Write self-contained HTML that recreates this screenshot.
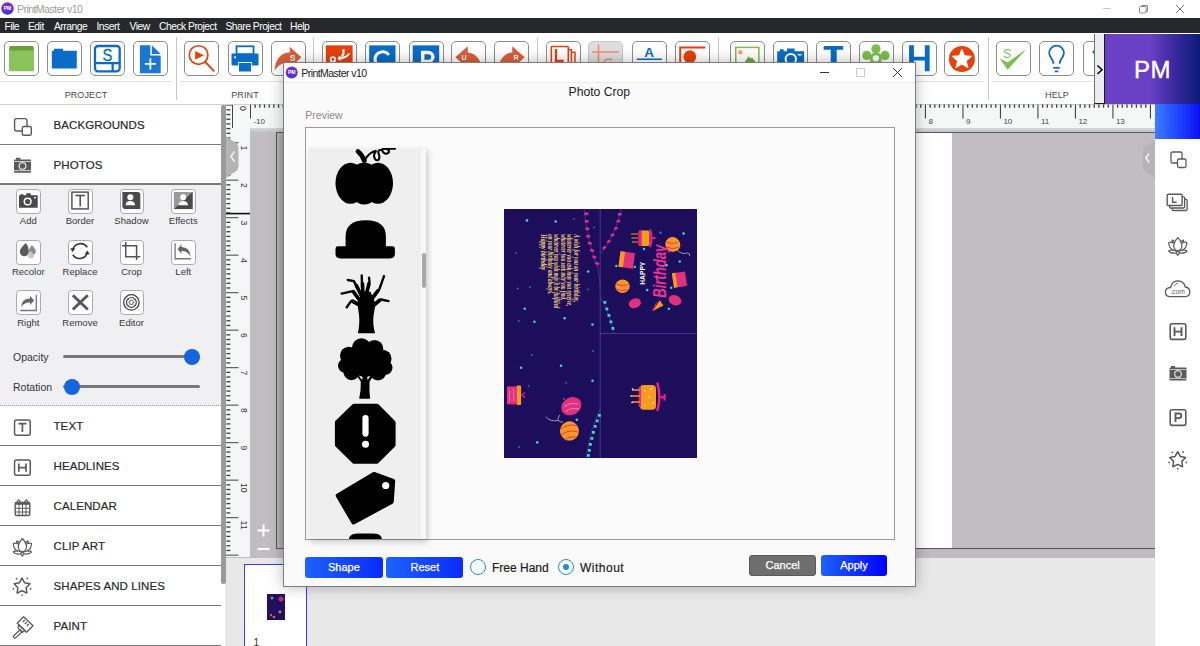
<!DOCTYPE html><html><head><meta charset="utf-8"><style>
*{margin:0;padding:0;box-sizing:border-box}
html,body{width:1200px;height:646px;overflow:hidden;background:#fff;font-family:"Liberation Sans",sans-serif;position:relative}
.a{position:absolute}
.btn{position:absolute;top:40.5px;width:35px;height:35.5px;border:1px solid #8c8c8c;border-radius:5px;background:#fff;overflow:hidden}
.btn svg{position:absolute;left:0;top:0}
.vsep{position:absolute;top:37px;width:1px;height:63px;background:#c8c8c8}
.hsep{position:absolute;top:81px;height:1px;background:#e2e2e2}
.glab{position:absolute;top:89.5px;font-size:9px;color:#484848;letter-spacing:0.1px;text-align:center}
.menu span{position:absolute;top:20.5px;font-size:10.3px;color:#fff;white-space:nowrap}
.row{position:absolute;left:0;width:221px;height:40px;background:#fff;border-bottom:1px solid #7a7a7a}
.row .t{position:absolute;left:53.5px;top:14px;font-size:11.5px;color:#2a2a2a;white-space:nowrap;letter-spacing:0.1px;-webkit-text-stroke:0.2px #2a2a2a}
.row svg{position:absolute;left:12px;top:11px}
.tool{position:absolute;width:24.5px;height:25.2px;border:1.3px solid #ababab;border-radius:3.5px;background:#fdfdfd}
.tl{position:absolute;font-size:9.5px;color:#383838;text-align:center;width:60px;white-space:nowrap}
.ri{position:absolute;left:1166px}
</style></head><body>
<div class="a" style="left:0;top:0;width:1200px;height:18px;background:#fff"></div>
<svg class="a" style="left:0;top:0" width="20" height="18"><defs><linearGradient id="lg1" x1="0" y1="0" x2="0" y2="1"><stop offset="0" stop-color="#8a2bb8"/><stop offset="1" stop-color="#4b32d6"/></linearGradient></defs>
<circle cx="7.5" cy="8.5" r="6.2" fill="url(#lg1)"/><text x="7.5" y="10.3" font-size="5" fill="#fff" text-anchor="middle" font-family="Liberation Sans" font-weight="bold">PM</text></svg>
<div class="a" style="left:17px;top:2.5px;font-size:10.5px;color:#9a9a9a;letter-spacing:-0.55px;white-space:nowrap">PrintMaster v10</div>
<div class="a" style="left:1103px;top:8px;width:8px;height:1px;background:#c8c8c8"></div>
<svg class="a" style="left:1138px;top:4px" width="11" height="10"><rect x="1.5" y="2.5" width="6.5" height="6.5" rx="1" fill="none" stroke="#888" stroke-width="1"/><path d="M3.5 2.5 V1.5 H9.5 V7.5 H8" fill="none" stroke="#888" stroke-width="1"/></svg>
<svg class="a" style="left:1175px;top:4px" width="10" height="10"><path d="M1 1 L9 9 M9 1 L1 9" stroke="#777" stroke-width="1"/></svg>

<div class="a menu" style="left:0;top:18px;width:1200px;height:15px;background:#27282c"></div>
<div class="menu">
<span style="left:4.5px;letter-spacing:-0.5px">File</span>
<span style="left:28px;letter-spacing:-0.5px">Edit</span>
<span style="left:54px;letter-spacing:-0.5px">Arrange</span>
<span style="left:96.5px;letter-spacing:-0.5px">Insert</span>
<span style="left:129.5px;letter-spacing:-0.5px">View</span>
<span style="left:159px;letter-spacing:-0.5px">Check Project</span>
<span style="left:225.5px;letter-spacing:-0.5px">Share Project</span>
<span style="left:290px;letter-spacing:-0.5px">Help</span>
</div>
<div class="a" style="left:0;top:103.5px;width:1200px;height:1px;background:#d0d0d0"></div>
<div class="btn" style="left:4px;"><svg width="35" height="36" viewBox="0 0 35 36" style="left:-1px;top:-1px"><rect x="5" y="5.1" width="25" height="25.2" rx="1.5" fill="#8bc45a"/><path d="M6.3 5.1 H28.7 L30 9.6 H5 Z" fill="#6a9e3a"/></svg></div>
<div class="btn" style="left:47px;"><svg width="35" height="36" viewBox="0 0 35 36" style="left:-1px;top:-1px"><path d="M4.8 9.7 H7 V7.8 H16 V9.7 H29.8 V27.6 H4.8 Z" fill="#0a6cc6"/></svg></div>
<div class="btn" style="left:90px;"><svg width="35" height="36" viewBox="0 0 35 36" style="left:-1px;top:-1px"><rect x="5" y="5" width="24.7" height="25.3" rx="3" fill="none" stroke="#0a6cc6" stroke-width="2.3"/><path d="M5 22.1 H29.7 M22.65 22.1 V30" stroke="#0a6cc6" stroke-width="2.3"/><text x="17.4" y="19.8" font-size="16.5" fill="#0a6cc6" text-anchor="middle" font-family="Liberation Sans" stroke="#0a6cc6" stroke-width="0.3" transform="translate(17.4 0) scale(0.9 1) translate(-17.4 0)">S</text></svg></div>
<div class="btn" style="left:133.2px;"><svg width="35" height="36" viewBox="0 0 35 36" style="left:-1px;top:-1px"><path d="M6.9 4.35 H17.3 V14.4 H27.7 V32.25 H6.9 Z" fill="#1a78d2"/><path d="M18.8 4.35 L27.7 12.9 H18.8 Z" fill="#1a78d2"/><path d="M17.4 17.3 V28.5 M11.8 22.9 H23" stroke="#fff" stroke-width="1.8"/></svg></div>
<div class="btn" style="left:184.4px;"><svg width="35" height="36" viewBox="0 0 35 36" style="left:-1px;top:-1px"><circle cx="14.6" cy="14.05" r="9.3" fill="none" stroke="#e8400a" stroke-width="1.7"/><path d="M21.3 21 L30.3 30.3" stroke="#e8400a" stroke-width="1.9"/><path d="M11.1 9.9 L19.9 14.3 L11.1 18.7 Z" fill="#e8400a"/></svg></div>
<div class="btn" style="left:228px;"><svg width="35" height="36" viewBox="0 0 35 36" style="left:-1px;top:-1px"><rect x="8.5" y="5.3" width="17" height="8" fill="none" stroke="#0a6cc6" stroke-width="1.8"/><rect x="3.5" y="12.5" width="27" height="12" rx="1" fill="#0a6cc6"/><rect x="10.5" y="21.5" width="13" height="9.5" fill="#0a6cc6" stroke="#fff" stroke-width="1"/><circle cx="7" cy="16.3" r="1.1" fill="#fff"/></svg></div>
<div class="btn" style="left:271.3px;"><svg width="35" height="36" viewBox="0 0 35 36" style="left:-1px;top:-1px"><path d="M3.6 29.8 C4 18.5 10 11.5 18.7 11.5 V5.85 L30.4 16.35 L18.7 27 V21.5 C12 21.5 7 24 3.6 29.8 Z" fill="#d9603b"/><text x="21.5" y="20.3" font-size="8.5" fill="#fff" text-anchor="middle" font-weight="bold" font-family="Liberation Sans">S</text></svg></div>
<div class="btn" style="left:322.3px;"><svg width="35" height="36" viewBox="0 0 35 36" style="left:-1px;top:-1px"><rect x="3.8" y="4.35" width="26.8" height="28" fill="#e8400a"/><circle cx="10.9" cy="18.45" r="2.3" fill="none" stroke="#fff" stroke-width="1.8"/><circle cx="17.9" cy="17.35" r="2.1" fill="#fff"/><path d="M19.5 15.5 Q22.5 13 21.2 8.1 M19.8 16.8 Q24 17 27.1 12.5" fill="none" stroke="#fff" stroke-width="2.2"/></svg></div>
<div class="btn" style="left:365.3px;"><svg width="35" height="36" viewBox="0 0 35 36" style="left:-1px;top:-1px"><rect x="4.2" y="4.35" width="26.3" height="28" fill="#0a6cc6"/><path d="M23.9 14 A7.6 7.6 0 1 0 24.5 21.5" fill="none" stroke="#fff" stroke-width="3"/></svg></div>
<div class="btn" style="left:408.6px;"><svg width="35" height="36" viewBox="0 0 35 36" style="left:-1px;top:-1px"><rect x="3.7" y="4.35" width="26.5" height="28" fill="#0a6cc6"/><path d="M13.7 32 V11.6 H19.5 A4.4 4.4 0 0 1 19.5 20.4 H13.7" fill="none" stroke="#fff" stroke-width="3.5"/></svg></div>
<div class="btn" style="left:451px;"><svg width="35" height="36" viewBox="0 0 35 36" style="left:-1px;top:-1px"><path d="M4.3 16.35 L16.8 5.2 V11.4 A14.7 20.6 0 0 1 31.5 32 H26 A9.2 10 0 0 0 16.8 22 V27.5 Z" fill="#d9603b"/><text x="13" y="19.4" font-size="7" fill="#fff" text-anchor="middle" font-weight="bold" font-family="Liberation Sans">U</text></svg></div>
<div class="btn" style="left:494px;"><svg width="35" height="36" viewBox="0 0 35 36" style="left:-1px;top:-1px"><path d="M30.7 16.35 L18.2 5.2 V11.4 A14.7 20.6 0 0 0 3.5 32 H9 A9.2 10 0 0 1 18.2 22 V27.5 Z" fill="#d9603b"/><text x="22" y="19.4" font-size="7" fill="#fff" text-anchor="middle" font-weight="bold" font-family="Liberation Sans">R</text></svg></div>
<div class="btn" style="left:546.3px;"><svg width="35" height="36" viewBox="0 0 35 36" style="left:-1px;top:-1px"><path d="M22.3 8.8 H25.4 V32 M25.4 11.2 H29 V32" fill="none" stroke="#e8400a" stroke-width="1.5"/><rect x="5.3" y="5.55" width="17" height="26" rx="1" fill="#fff" stroke="#e8400a" stroke-width="1.6"/><path d="M10 8 V20 H17.7" fill="none" stroke="#e8400a" stroke-width="2.3"/></svg></div>
<div class="btn" style="left:588.2px;background:#dedede;border-color:#c6c6c6;"><svg width="35" height="36" viewBox="0 0 35 36" style="left:-1px;top:-1px"><path d="M4.1 11.05 H31 M10.5 3.5 V33" stroke="#f28c6c" stroke-width="1.6"/><path d="M24.3 19.5 A5 5 0 1 0 24.6 26 V23.5 H20" fill="none" stroke="#f28c6c" stroke-width="1.5"/></svg></div>
<div class="btn" style="left:631.5px;"><svg width="35" height="36" viewBox="0 0 35 36" style="left:-1px;top:-1px"><text x="17.2" y="15.5" font-size="13.5" fill="#0a6cc6" text-anchor="middle" font-weight="bold" font-family="Liberation Sans">A</text><path d="M4.7 18.35 H29.9 M4.7 22 H29.9" stroke="#0a6cc6" stroke-width="1.5"/></svg></div>
<div class="btn" style="left:674.5px;"><svg width="35" height="36" viewBox="0 0 35 36" style="left:-1px;top:-1px"><path d="M5.2 33 V6.55 H30.4" fill="none" stroke="#e8400a" stroke-width="2"/><circle cx="14.8" cy="15.75" r="6.4" fill="#e8400a"/></svg></div>
<div class="btn" style="left:730.2px;"><svg width="35" height="36" viewBox="0 0 35 36" style="left:-1px;top:-1px"><rect x="5.75" y="6.4" width="23.1" height="26" fill="#fff" stroke="#7cbf4f" stroke-width="1.5"/><circle cx="10.4" cy="11.25" r="2.2" fill="#f0a860"/><path d="M12 25 L18.8 15.3 L20.6 17.8 L22 16.6 L28.5 25 Z" fill="#6aaa3a"/></svg></div>
<div class="btn" style="left:772.7px;"><svg width="35" height="36" viewBox="0 0 35 36" style="left:-1px;top:-1px"><path d="M4.2 10.35 H6.9 V8.15 H10.7 V10.35 H14 V7.45 H21.6 V10.35 H31.1 V33 H4.2 Z" fill="#0a6cc6"/><circle cx="17.8" cy="18.2" r="6.2" fill="#fff"/><circle cx="17.8" cy="18.2" r="4.1" fill="#0a6cc6"/><rect x="24.8" y="13.05" width="3.8" height="1.4" fill="#fff"/></svg></div>
<div class="btn" style="left:815.8px;"><svg width="35" height="36" viewBox="0 0 35 36" style="left:-1px;top:-1px"><path d="M7.7 4.95 H27.2 V8.75 H20.7 V33 H14.7 V8.75 H7.7 Z" fill="#0a6cc6"/></svg></div>
<div class="btn" style="left:859.1px;"><svg width="35" height="36" viewBox="0 0 35 36" style="left:-1px;top:-1px"><circle cx="16.90" cy="7.75" r="4.6" fill="#7cbf4f"/><circle cx="26.03" cy="14.38" r="4.6" fill="#7cbf4f"/><circle cx="22.54" cy="25.12" r="4.6" fill="#7cbf4f"/><circle cx="11.26" cy="25.12" r="4.6" fill="#7cbf4f"/><circle cx="7.77" cy="14.38" r="4.6" fill="#7cbf4f"/><circle cx="16.9" cy="17.35" r="6" fill="#7cbf4f"/><circle cx="16.9" cy="17.35" r="3.2" fill="#fff"/></svg></div>
<div class="btn" style="left:902.1px;"><svg width="35" height="36" viewBox="0 0 35 36" style="left:-1px;top:-1px"><path d="M7.1 4.35 H11.9 V15.75 H22.8 V4.35 H27.65 V30.35 H22.8 V19.55 H11.9 V30.35 H7.1 Z" fill="#0a6cc6"/></svg></div>
<div class="btn" style="left:944.4px;"><svg width="35" height="36" viewBox="0 0 35 36" style="left:-1px;top:-1px"><circle cx="17.9" cy="17.95" r="13" fill="#e8400a"/><polygon points="17.90,8.20 20.55,14.86 27.70,15.32 22.18,19.89 23.95,26.83 17.90,23.00 11.85,26.83 13.62,19.89 8.10,15.32 15.25,14.86" fill="#fff" stroke="#fff" stroke-width="1" stroke-linejoin="round"/></svg></div>
<div class="btn" style="left:996.4px;"><svg width="35" height="36" viewBox="0 0 35 36" style="left:-1px;top:-1px"><path d="M3.6 17.35 L11.6 21.6 L30.6 7.85 L11.6 28.85 Z" fill="#7cbf4f"/><text x="11.1" y="16.9" font-size="12.5" fill="#7cbf4f" text-anchor="middle" font-family="Liberation Sans">S</text></svg></div>
<div class="btn" style="left:1039.2px;"><svg width="35" height="36" viewBox="0 0 35 36" style="left:-1px;top:-1px"><path d="M14.3 22.85 V21.5 C14.3 18.5 10.2 16 10.2 12 A7.35 7.35 0 0 1 24.9 12 C24.9 16 20.8 18.5 20.8 21.5 V22.85" fill="none" stroke="#0a6cc6" stroke-width="1.8"/><path d="M14.3 26.85 H20.8 M15.8 30.35 H19.3" stroke="#0a6cc6" stroke-width="1.6"/></svg></div>
<div class="btn" style="left:1082.5px;"><svg width="35" height="36" viewBox="0 0 35 36" style="left:-1px;top:-1px"><path d="M10 12 L15 6 L15 18" fill="none" stroke="#0a6cc6" stroke-width="2.5"/></svg></div>
<div class="vsep" style="left:175.7px"></div>
<div class="vsep" style="left:313.4px"></div>
<div class="vsep" style="left:537px"></div>
<div class="vsep" style="left:717.5px"></div>
<div class="vsep" style="left:987.7px"></div>
<div class="hsep" style="left:0px;width:172px"></div>
<div class="hsep" style="left:180px;width:360px"></div>
<div class="hsep" style="left:548px;width:164px"></div>
<div class="hsep" style="left:722px;width:262px"></div>
<div class="hsep" style="left:993px;width:100px"></div>
<div class="glab" style="left:46px;width:80px">PROJECT</div>
<div class="glab" style="left:205px;width:80px">PRINT</div>
<div class="glab" style="left:1017px;width:80px">HELP</div>
<div class="a" style="left:1094.4px;top:34px;width:11px;height:70px;background:#ececec;border-left:1.2px solid #707070;border-right:1.5px solid #1a1a1a;border-bottom:1.2px solid #1a1a1a"></div>
<svg class="a" style="left:1095px;top:64px" width="10" height="12"><path d="M2.5 1.5 L7 5.8 L2.5 10" fill="none" stroke="#000" stroke-width="1.5"/></svg>
<div class="a" style="left:1105px;top:34px;width:95px;height:70px;background:linear-gradient(90deg,#6a40c4 0%,#6a40c4 48%,#3a2aa0 72%,#0a1a78 100%)"></div>
<div class="a" style="left:1105px;top:55.5px;width:95px;text-align:center;font-size:24px;color:#fff;letter-spacing:0.5px;-webkit-text-stroke:0.4px #fff">PM</div>
<div class="a" style="left:225px;top:104.5px;width:930px;height:453px;background:#c0bec0"></div>
<div class="a" style="left:225px;top:557.5px;width:930px;height:89px;background:#e8e8e8"></div>
<div class="a" style="left:276px;top:132px;width:676.4px;height:416px;background:#fff;border-left:1px solid #555;border-top:1px solid #555"></div>
<div class="a" style="left:276px;top:547.8px;width:879px;height:9.7px;background:#bebcbe;border-top:1px solid #555"></div>
<div class="a" style="left:244px;top:564.4px;width:62.5px;height:90px;background:#fff;border:1px solid #3a3aff"></div>
<div class="a" style="left:266.5px;top:594px;width:18.5px;height:25.5px;background:#201060"></div>
<svg class="a" style="left:266.5px;top:594px" width="19" height="26"><circle cx="5" cy="4" r="1.5" fill="#888"/><circle cx="14" cy="5" r="2.5" fill="#c03070"/><circle cx="4" cy="21" r="1.2" fill="#e06040"/><circle cx="13" cy="18" r="1.4" fill="#e08040"/><circle cx="7" cy="23" r="1.3" fill="#e06040"/></svg>
<div class="a" style="left:253.5px;top:637px;font-size:10px;color:#333">1</div>
<svg class="a" style="left:254px;top:520px" width="20" height="36"><path d="M3.5 10.5 H15.5 M9.5 4.5 V16.5 M3.5 29 H15.5" stroke="#fff" stroke-width="2"/></svg>
<div class="a" style="left:250px;top:104px;width:905px;height:24.7px;background:#f5f6f6;border-top:1px solid #c8c8c8"></div><svg class="a" style="left:250px;top:104px" width="905" height="25"><rect x="-0.10" y="0.5" width="1.1" height="14" fill="#444"/><text x="3.40" y="19.5" font-size="8" fill="#444" font-family="Liberation Sans">-10</text><rect x="4.49" y="0.5" width="1.3" height="3.2" fill="#3a3a3a"/><rect x="9.18" y="0.5" width="1.3" height="3.2" fill="#3a3a3a"/><rect x="13.86" y="0.5" width="1.3" height="3.2" fill="#3a3a3a"/><rect x="18.55" y="0.5" width="1.3" height="3.2" fill="#3a3a3a"/><rect x="23.24" y="0.5" width="1.3" height="3.2" fill="#3a3a3a"/><rect x="27.92" y="0.5" width="1.3" height="3.2" fill="#3a3a3a"/><rect x="32.61" y="0.5" width="1.3" height="3.2" fill="#3a3a3a"/><rect x="37.40" y="0.5" width="1.1" height="14" fill="#444"/><text x="40.90" y="19.5" font-size="8" fill="#444" font-family="Liberation Sans">-9</text><rect x="41.99" y="0.5" width="1.3" height="3.2" fill="#3a3a3a"/><rect x="46.67" y="0.5" width="1.3" height="3.2" fill="#3a3a3a"/><rect x="51.36" y="0.5" width="1.3" height="3.2" fill="#3a3a3a"/><rect x="56.05" y="0.5" width="1.3" height="3.2" fill="#3a3a3a"/><rect x="60.74" y="0.5" width="1.3" height="3.2" fill="#3a3a3a"/><rect x="65.43" y="0.5" width="1.3" height="3.2" fill="#3a3a3a"/><rect x="70.11" y="0.5" width="1.3" height="3.2" fill="#3a3a3a"/><rect x="74.90" y="0.5" width="1.1" height="14" fill="#444"/><text x="78.40" y="19.5" font-size="8" fill="#444" font-family="Liberation Sans">-8</text><rect x="79.49" y="0.5" width="1.3" height="3.2" fill="#3a3a3a"/><rect x="84.18" y="0.5" width="1.3" height="3.2" fill="#3a3a3a"/><rect x="88.86" y="0.5" width="1.3" height="3.2" fill="#3a3a3a"/><rect x="93.55" y="0.5" width="1.3" height="3.2" fill="#3a3a3a"/><rect x="98.24" y="0.5" width="1.3" height="3.2" fill="#3a3a3a"/><rect x="102.93" y="0.5" width="1.3" height="3.2" fill="#3a3a3a"/><rect x="107.61" y="0.5" width="1.3" height="3.2" fill="#3a3a3a"/><rect x="112.40" y="0.5" width="1.1" height="14" fill="#444"/><text x="115.90" y="19.5" font-size="8" fill="#444" font-family="Liberation Sans">-7</text><rect x="116.99" y="0.5" width="1.3" height="3.2" fill="#3a3a3a"/><rect x="121.68" y="0.5" width="1.3" height="3.2" fill="#3a3a3a"/><rect x="126.36" y="0.5" width="1.3" height="3.2" fill="#3a3a3a"/><rect x="131.05" y="0.5" width="1.3" height="3.2" fill="#3a3a3a"/><rect x="135.74" y="0.5" width="1.3" height="3.2" fill="#3a3a3a"/><rect x="140.43" y="0.5" width="1.3" height="3.2" fill="#3a3a3a"/><rect x="145.11" y="0.5" width="1.3" height="3.2" fill="#3a3a3a"/><rect x="149.90" y="0.5" width="1.1" height="14" fill="#444"/><text x="153.40" y="19.5" font-size="8" fill="#444" font-family="Liberation Sans">-6</text><rect x="154.49" y="0.5" width="1.3" height="3.2" fill="#3a3a3a"/><rect x="159.18" y="0.5" width="1.3" height="3.2" fill="#3a3a3a"/><rect x="163.86" y="0.5" width="1.3" height="3.2" fill="#3a3a3a"/><rect x="168.55" y="0.5" width="1.3" height="3.2" fill="#3a3a3a"/><rect x="173.24" y="0.5" width="1.3" height="3.2" fill="#3a3a3a"/><rect x="177.93" y="0.5" width="1.3" height="3.2" fill="#3a3a3a"/><rect x="182.61" y="0.5" width="1.3" height="3.2" fill="#3a3a3a"/><rect x="187.40" y="0.5" width="1.1" height="14" fill="#444"/><text x="190.90" y="19.5" font-size="8" fill="#444" font-family="Liberation Sans">-5</text><rect x="191.99" y="0.5" width="1.3" height="3.2" fill="#3a3a3a"/><rect x="196.68" y="0.5" width="1.3" height="3.2" fill="#3a3a3a"/><rect x="201.36" y="0.5" width="1.3" height="3.2" fill="#3a3a3a"/><rect x="206.05" y="0.5" width="1.3" height="3.2" fill="#3a3a3a"/><rect x="210.74" y="0.5" width="1.3" height="3.2" fill="#3a3a3a"/><rect x="215.43" y="0.5" width="1.3" height="3.2" fill="#3a3a3a"/><rect x="220.11" y="0.5" width="1.3" height="3.2" fill="#3a3a3a"/><rect x="224.90" y="0.5" width="1.1" height="14" fill="#444"/><text x="228.40" y="19.5" font-size="8" fill="#444" font-family="Liberation Sans">-4</text><rect x="229.49" y="0.5" width="1.3" height="3.2" fill="#3a3a3a"/><rect x="234.18" y="0.5" width="1.3" height="3.2" fill="#3a3a3a"/><rect x="238.86" y="0.5" width="1.3" height="3.2" fill="#3a3a3a"/><rect x="243.55" y="0.5" width="1.3" height="3.2" fill="#3a3a3a"/><rect x="248.24" y="0.5" width="1.3" height="3.2" fill="#3a3a3a"/><rect x="252.93" y="0.5" width="1.3" height="3.2" fill="#3a3a3a"/><rect x="257.61" y="0.5" width="1.3" height="3.2" fill="#3a3a3a"/><rect x="262.40" y="0.5" width="1.1" height="14" fill="#444"/><text x="265.90" y="19.5" font-size="8" fill="#444" font-family="Liberation Sans">-3</text><rect x="266.99" y="0.5" width="1.3" height="3.2" fill="#3a3a3a"/><rect x="271.67" y="0.5" width="1.3" height="3.2" fill="#3a3a3a"/><rect x="276.36" y="0.5" width="1.3" height="3.2" fill="#3a3a3a"/><rect x="281.05" y="0.5" width="1.3" height="3.2" fill="#3a3a3a"/><rect x="285.74" y="0.5" width="1.3" height="3.2" fill="#3a3a3a"/><rect x="290.42" y="0.5" width="1.3" height="3.2" fill="#3a3a3a"/><rect x="295.11" y="0.5" width="1.3" height="3.2" fill="#3a3a3a"/><rect x="299.90" y="0.5" width="1.1" height="14" fill="#444"/><text x="303.40" y="19.5" font-size="8" fill="#444" font-family="Liberation Sans">-2</text><rect x="304.49" y="0.5" width="1.3" height="3.2" fill="#3a3a3a"/><rect x="309.17" y="0.5" width="1.3" height="3.2" fill="#3a3a3a"/><rect x="313.86" y="0.5" width="1.3" height="3.2" fill="#3a3a3a"/><rect x="318.55" y="0.5" width="1.3" height="3.2" fill="#3a3a3a"/><rect x="323.24" y="0.5" width="1.3" height="3.2" fill="#3a3a3a"/><rect x="327.92" y="0.5" width="1.3" height="3.2" fill="#3a3a3a"/><rect x="332.61" y="0.5" width="1.3" height="3.2" fill="#3a3a3a"/><rect x="337.40" y="0.5" width="1.1" height="14" fill="#444"/><text x="340.90" y="19.5" font-size="8" fill="#444" font-family="Liberation Sans">-1</text><rect x="341.99" y="0.5" width="1.3" height="3.2" fill="#3a3a3a"/><rect x="346.67" y="0.5" width="1.3" height="3.2" fill="#3a3a3a"/><rect x="351.36" y="0.5" width="1.3" height="3.2" fill="#3a3a3a"/><rect x="356.05" y="0.5" width="1.3" height="3.2" fill="#3a3a3a"/><rect x="360.74" y="0.5" width="1.3" height="3.2" fill="#3a3a3a"/><rect x="365.42" y="0.5" width="1.3" height="3.2" fill="#3a3a3a"/><rect x="370.11" y="0.5" width="1.3" height="3.2" fill="#3a3a3a"/><rect x="374.90" y="0.5" width="1.1" height="14" fill="#444"/><text x="378.40" y="19.5" font-size="8" fill="#444" font-family="Liberation Sans">0</text><rect x="379.49" y="0.5" width="1.3" height="3.2" fill="#3a3a3a"/><rect x="384.17" y="0.5" width="1.3" height="3.2" fill="#3a3a3a"/><rect x="388.86" y="0.5" width="1.3" height="3.2" fill="#3a3a3a"/><rect x="393.55" y="0.5" width="1.3" height="3.2" fill="#3a3a3a"/><rect x="398.24" y="0.5" width="1.3" height="3.2" fill="#3a3a3a"/><rect x="402.92" y="0.5" width="1.3" height="3.2" fill="#3a3a3a"/><rect x="407.61" y="0.5" width="1.3" height="3.2" fill="#3a3a3a"/><rect x="412.40" y="0.5" width="1.1" height="14" fill="#444"/><text x="415.90" y="19.5" font-size="8" fill="#444" font-family="Liberation Sans">1</text><rect x="416.99" y="0.5" width="1.3" height="3.2" fill="#3a3a3a"/><rect x="421.67" y="0.5" width="1.3" height="3.2" fill="#3a3a3a"/><rect x="426.36" y="0.5" width="1.3" height="3.2" fill="#3a3a3a"/><rect x="431.05" y="0.5" width="1.3" height="3.2" fill="#3a3a3a"/><rect x="435.74" y="0.5" width="1.3" height="3.2" fill="#3a3a3a"/><rect x="440.42" y="0.5" width="1.3" height="3.2" fill="#3a3a3a"/><rect x="445.11" y="0.5" width="1.3" height="3.2" fill="#3a3a3a"/><rect x="449.90" y="0.5" width="1.1" height="14" fill="#444"/><text x="453.40" y="19.5" font-size="8" fill="#444" font-family="Liberation Sans">2</text><rect x="454.49" y="0.5" width="1.3" height="3.2" fill="#3a3a3a"/><rect x="459.17" y="0.5" width="1.3" height="3.2" fill="#3a3a3a"/><rect x="463.86" y="0.5" width="1.3" height="3.2" fill="#3a3a3a"/><rect x="468.55" y="0.5" width="1.3" height="3.2" fill="#3a3a3a"/><rect x="473.24" y="0.5" width="1.3" height="3.2" fill="#3a3a3a"/><rect x="477.92" y="0.5" width="1.3" height="3.2" fill="#3a3a3a"/><rect x="482.61" y="0.5" width="1.3" height="3.2" fill="#3a3a3a"/><rect x="487.40" y="0.5" width="1.1" height="14" fill="#444"/><text x="490.90" y="19.5" font-size="8" fill="#444" font-family="Liberation Sans">3</text><rect x="491.99" y="0.5" width="1.3" height="3.2" fill="#3a3a3a"/><rect x="496.67" y="0.5" width="1.3" height="3.2" fill="#3a3a3a"/><rect x="501.36" y="0.5" width="1.3" height="3.2" fill="#3a3a3a"/><rect x="506.05" y="0.5" width="1.3" height="3.2" fill="#3a3a3a"/><rect x="510.74" y="0.5" width="1.3" height="3.2" fill="#3a3a3a"/><rect x="515.42" y="0.5" width="1.3" height="3.2" fill="#3a3a3a"/><rect x="520.11" y="0.5" width="1.3" height="3.2" fill="#3a3a3a"/><rect x="524.90" y="0.5" width="1.1" height="14" fill="#444"/><text x="528.40" y="19.5" font-size="8" fill="#444" font-family="Liberation Sans">4</text><rect x="529.49" y="0.5" width="1.3" height="3.2" fill="#3a3a3a"/><rect x="534.17" y="0.5" width="1.3" height="3.2" fill="#3a3a3a"/><rect x="538.86" y="0.5" width="1.3" height="3.2" fill="#3a3a3a"/><rect x="543.55" y="0.5" width="1.3" height="3.2" fill="#3a3a3a"/><rect x="548.24" y="0.5" width="1.3" height="3.2" fill="#3a3a3a"/><rect x="552.92" y="0.5" width="1.3" height="3.2" fill="#3a3a3a"/><rect x="557.61" y="0.5" width="1.3" height="3.2" fill="#3a3a3a"/><rect x="562.40" y="0.5" width="1.1" height="14" fill="#444"/><text x="565.90" y="19.5" font-size="8" fill="#444" font-family="Liberation Sans">5</text><rect x="566.99" y="0.5" width="1.3" height="3.2" fill="#3a3a3a"/><rect x="571.67" y="0.5" width="1.3" height="3.2" fill="#3a3a3a"/><rect x="576.36" y="0.5" width="1.3" height="3.2" fill="#3a3a3a"/><rect x="581.05" y="0.5" width="1.3" height="3.2" fill="#3a3a3a"/><rect x="585.74" y="0.5" width="1.3" height="3.2" fill="#3a3a3a"/><rect x="590.42" y="0.5" width="1.3" height="3.2" fill="#3a3a3a"/><rect x="595.11" y="0.5" width="1.3" height="3.2" fill="#3a3a3a"/><rect x="599.90" y="0.5" width="1.1" height="14" fill="#444"/><text x="603.40" y="19.5" font-size="8" fill="#444" font-family="Liberation Sans">6</text><rect x="604.49" y="0.5" width="1.3" height="3.2" fill="#3a3a3a"/><rect x="609.17" y="0.5" width="1.3" height="3.2" fill="#3a3a3a"/><rect x="613.86" y="0.5" width="1.3" height="3.2" fill="#3a3a3a"/><rect x="618.55" y="0.5" width="1.3" height="3.2" fill="#3a3a3a"/><rect x="623.24" y="0.5" width="1.3" height="3.2" fill="#3a3a3a"/><rect x="627.92" y="0.5" width="1.3" height="3.2" fill="#3a3a3a"/><rect x="632.61" y="0.5" width="1.3" height="3.2" fill="#3a3a3a"/><rect x="637.40" y="0.5" width="1.1" height="14" fill="#444"/><text x="640.90" y="19.5" font-size="8" fill="#444" font-family="Liberation Sans">7</text><rect x="641.99" y="0.5" width="1.3" height="3.2" fill="#3a3a3a"/><rect x="646.67" y="0.5" width="1.3" height="3.2" fill="#3a3a3a"/><rect x="651.36" y="0.5" width="1.3" height="3.2" fill="#3a3a3a"/><rect x="656.05" y="0.5" width="1.3" height="3.2" fill="#3a3a3a"/><rect x="660.74" y="0.5" width="1.3" height="3.2" fill="#3a3a3a"/><rect x="665.42" y="0.5" width="1.3" height="3.2" fill="#3a3a3a"/><rect x="670.11" y="0.5" width="1.3" height="3.2" fill="#3a3a3a"/><rect x="674.90" y="0.5" width="1.1" height="14" fill="#444"/><text x="678.40" y="19.5" font-size="8" fill="#444" font-family="Liberation Sans">8</text><rect x="679.49" y="0.5" width="1.3" height="3.2" fill="#3a3a3a"/><rect x="684.17" y="0.5" width="1.3" height="3.2" fill="#3a3a3a"/><rect x="688.86" y="0.5" width="1.3" height="3.2" fill="#3a3a3a"/><rect x="693.55" y="0.5" width="1.3" height="3.2" fill="#3a3a3a"/><rect x="698.24" y="0.5" width="1.3" height="3.2" fill="#3a3a3a"/><rect x="702.92" y="0.5" width="1.3" height="3.2" fill="#3a3a3a"/><rect x="707.61" y="0.5" width="1.3" height="3.2" fill="#3a3a3a"/><rect x="712.40" y="0.5" width="1.1" height="14" fill="#444"/><text x="715.90" y="19.5" font-size="8" fill="#444" font-family="Liberation Sans">9</text><rect x="716.99" y="0.5" width="1.3" height="3.2" fill="#3a3a3a"/><rect x="721.67" y="0.5" width="1.3" height="3.2" fill="#3a3a3a"/><rect x="726.36" y="0.5" width="1.3" height="3.2" fill="#3a3a3a"/><rect x="731.05" y="0.5" width="1.3" height="3.2" fill="#3a3a3a"/><rect x="735.74" y="0.5" width="1.3" height="3.2" fill="#3a3a3a"/><rect x="740.42" y="0.5" width="1.3" height="3.2" fill="#3a3a3a"/><rect x="745.11" y="0.5" width="1.3" height="3.2" fill="#3a3a3a"/><rect x="749.90" y="0.5" width="1.1" height="14" fill="#444"/><text x="753.40" y="19.5" font-size="8" fill="#444" font-family="Liberation Sans">10</text><rect x="754.49" y="0.5" width="1.3" height="3.2" fill="#3a3a3a"/><rect x="759.17" y="0.5" width="1.3" height="3.2" fill="#3a3a3a"/><rect x="763.86" y="0.5" width="1.3" height="3.2" fill="#3a3a3a"/><rect x="768.55" y="0.5" width="1.3" height="3.2" fill="#3a3a3a"/><rect x="773.24" y="0.5" width="1.3" height="3.2" fill="#3a3a3a"/><rect x="777.92" y="0.5" width="1.3" height="3.2" fill="#3a3a3a"/><rect x="782.61" y="0.5" width="1.3" height="3.2" fill="#3a3a3a"/><rect x="787.40" y="0.5" width="1.1" height="14" fill="#444"/><text x="790.90" y="19.5" font-size="8" fill="#444" font-family="Liberation Sans">11</text><rect x="791.99" y="0.5" width="1.3" height="3.2" fill="#3a3a3a"/><rect x="796.67" y="0.5" width="1.3" height="3.2" fill="#3a3a3a"/><rect x="801.36" y="0.5" width="1.3" height="3.2" fill="#3a3a3a"/><rect x="806.05" y="0.5" width="1.3" height="3.2" fill="#3a3a3a"/><rect x="810.74" y="0.5" width="1.3" height="3.2" fill="#3a3a3a"/><rect x="815.42" y="0.5" width="1.3" height="3.2" fill="#3a3a3a"/><rect x="820.11" y="0.5" width="1.3" height="3.2" fill="#3a3a3a"/><rect x="824.90" y="0.5" width="1.1" height="14" fill="#444"/><text x="828.40" y="19.5" font-size="8" fill="#444" font-family="Liberation Sans">12</text><rect x="829.49" y="0.5" width="1.3" height="3.2" fill="#3a3a3a"/><rect x="834.17" y="0.5" width="1.3" height="3.2" fill="#3a3a3a"/><rect x="838.86" y="0.5" width="1.3" height="3.2" fill="#3a3a3a"/><rect x="843.55" y="0.5" width="1.3" height="3.2" fill="#3a3a3a"/><rect x="848.24" y="0.5" width="1.3" height="3.2" fill="#3a3a3a"/><rect x="852.92" y="0.5" width="1.3" height="3.2" fill="#3a3a3a"/><rect x="857.61" y="0.5" width="1.3" height="3.2" fill="#3a3a3a"/><rect x="862.40" y="0.5" width="1.1" height="14" fill="#444"/><text x="865.90" y="19.5" font-size="8" fill="#444" font-family="Liberation Sans">13</text><rect x="866.99" y="0.5" width="1.3" height="3.2" fill="#3a3a3a"/><rect x="871.67" y="0.5" width="1.3" height="3.2" fill="#3a3a3a"/><rect x="876.36" y="0.5" width="1.3" height="3.2" fill="#3a3a3a"/><rect x="881.05" y="0.5" width="1.3" height="3.2" fill="#3a3a3a"/><rect x="885.74" y="0.5" width="1.3" height="3.2" fill="#3a3a3a"/><rect x="890.42" y="0.5" width="1.3" height="3.2" fill="#3a3a3a"/><rect x="895.11" y="0.5" width="1.3" height="3.2" fill="#3a3a3a"/><rect x="899.90" y="0.5" width="1.1" height="14" fill="#444"/><text x="903.40" y="19.5" font-size="8" fill="#444" font-family="Liberation Sans">14</text></svg>
<div class="a" style="left:250px;top:128.3px;width:905px;height:3.5px;background:linear-gradient(180deg,#d6d8dc,#c4c4c6)"></div>
<div class="a" style="left:276px;top:131.6px;width:879px;height:1px;background:#5a5a5a"></div>
<div class="a" style="left:277px;top:133px;width:7px;height:415px;background:linear-gradient(90deg,#b8b8b8,#acacac 70%,#8a8a8a)"></div>
<div class="a" style="left:225.5px;top:104.5px;width:24.5px;height:452px;background:#f5f6f6"></div><svg class="a" style="left:225.5px;top:104.5px" width="25" height="452"><rect x="0" y="-0.40" width="12.5" height="1.1" fill="#555"/><text x="0" y="0" font-size="8.5" fill="#333" font-family="Liberation Sans" transform="translate(15,3.10) rotate(90)">0</text><rect x="0.5" y="4.19" width="3.8" height="1.3" fill="#3a3a3a"/><rect x="0.5" y="8.88" width="3.8" height="1.3" fill="#3a3a3a"/><rect x="0.5" y="13.56" width="3.8" height="1.3" fill="#3a3a3a"/><rect x="0.5" y="18.25" width="3.8" height="1.3" fill="#3a3a3a"/><rect x="0.5" y="22.94" width="3.8" height="1.3" fill="#3a3a3a"/><rect x="0.5" y="27.62" width="3.8" height="1.3" fill="#3a3a3a"/><rect x="0.5" y="32.31" width="3.8" height="1.3" fill="#3a3a3a"/><rect x="0" y="37.10" width="12.5" height="1.1" fill="#555"/><text x="0" y="0" font-size="8.5" fill="#333" font-family="Liberation Sans" transform="translate(15,40.60) rotate(90)">1</text><rect x="0.5" y="41.69" width="3.8" height="1.3" fill="#3a3a3a"/><rect x="0.5" y="46.38" width="3.8" height="1.3" fill="#3a3a3a"/><rect x="0.5" y="51.06" width="3.8" height="1.3" fill="#3a3a3a"/><rect x="0.5" y="55.75" width="3.8" height="1.3" fill="#3a3a3a"/><rect x="0.5" y="60.44" width="3.8" height="1.3" fill="#3a3a3a"/><rect x="0.5" y="65.12" width="3.8" height="1.3" fill="#3a3a3a"/><rect x="0.5" y="69.81" width="3.8" height="1.3" fill="#3a3a3a"/><rect x="0" y="74.60" width="12.5" height="1.1" fill="#555"/><text x="0" y="0" font-size="8.5" fill="#333" font-family="Liberation Sans" transform="translate(15,78.10) rotate(90)">2</text><rect x="0.5" y="79.19" width="3.8" height="1.3" fill="#3a3a3a"/><rect x="0.5" y="83.88" width="3.8" height="1.3" fill="#3a3a3a"/><rect x="0.5" y="88.56" width="3.8" height="1.3" fill="#3a3a3a"/><rect x="0.5" y="93.25" width="3.8" height="1.3" fill="#3a3a3a"/><rect x="0.5" y="97.94" width="3.8" height="1.3" fill="#3a3a3a"/><rect x="0.5" y="102.62" width="3.8" height="1.3" fill="#3a3a3a"/><rect x="0.5" y="107.31" width="3.8" height="1.3" fill="#3a3a3a"/><rect x="0" y="112.10" width="12.5" height="1.1" fill="#555"/><text x="0" y="0" font-size="8.5" fill="#333" font-family="Liberation Sans" transform="translate(15,115.60) rotate(90)">3</text><rect x="0.5" y="116.69" width="3.8" height="1.3" fill="#3a3a3a"/><rect x="0.5" y="121.38" width="3.8" height="1.3" fill="#3a3a3a"/><rect x="0.5" y="126.06" width="3.8" height="1.3" fill="#3a3a3a"/><rect x="0.5" y="130.75" width="3.8" height="1.3" fill="#3a3a3a"/><rect x="0.5" y="135.44" width="3.8" height="1.3" fill="#3a3a3a"/><rect x="0.5" y="140.12" width="3.8" height="1.3" fill="#3a3a3a"/><rect x="0.5" y="144.81" width="3.8" height="1.3" fill="#3a3a3a"/><rect x="0" y="149.60" width="12.5" height="1.1" fill="#555"/><text x="0" y="0" font-size="8.5" fill="#333" font-family="Liberation Sans" transform="translate(15,153.10) rotate(90)">4</text><rect x="0.5" y="154.19" width="3.8" height="1.3" fill="#3a3a3a"/><rect x="0.5" y="158.88" width="3.8" height="1.3" fill="#3a3a3a"/><rect x="0.5" y="163.56" width="3.8" height="1.3" fill="#3a3a3a"/><rect x="0.5" y="168.25" width="3.8" height="1.3" fill="#3a3a3a"/><rect x="0.5" y="172.94" width="3.8" height="1.3" fill="#3a3a3a"/><rect x="0.5" y="177.62" width="3.8" height="1.3" fill="#3a3a3a"/><rect x="0.5" y="182.31" width="3.8" height="1.3" fill="#3a3a3a"/><rect x="0" y="187.10" width="12.5" height="1.1" fill="#555"/><text x="0" y="0" font-size="8.5" fill="#333" font-family="Liberation Sans" transform="translate(15,190.60) rotate(90)">5</text><rect x="0.5" y="191.69" width="3.8" height="1.3" fill="#3a3a3a"/><rect x="0.5" y="196.38" width="3.8" height="1.3" fill="#3a3a3a"/><rect x="0.5" y="201.06" width="3.8" height="1.3" fill="#3a3a3a"/><rect x="0.5" y="205.75" width="3.8" height="1.3" fill="#3a3a3a"/><rect x="0.5" y="210.44" width="3.8" height="1.3" fill="#3a3a3a"/><rect x="0.5" y="215.12" width="3.8" height="1.3" fill="#3a3a3a"/><rect x="0.5" y="219.81" width="3.8" height="1.3" fill="#3a3a3a"/><rect x="0" y="224.60" width="12.5" height="1.1" fill="#555"/><text x="0" y="0" font-size="8.5" fill="#333" font-family="Liberation Sans" transform="translate(15,228.10) rotate(90)">6</text><rect x="0.5" y="229.19" width="3.8" height="1.3" fill="#3a3a3a"/><rect x="0.5" y="233.88" width="3.8" height="1.3" fill="#3a3a3a"/><rect x="0.5" y="238.56" width="3.8" height="1.3" fill="#3a3a3a"/><rect x="0.5" y="243.25" width="3.8" height="1.3" fill="#3a3a3a"/><rect x="0.5" y="247.94" width="3.8" height="1.3" fill="#3a3a3a"/><rect x="0.5" y="252.62" width="3.8" height="1.3" fill="#3a3a3a"/><rect x="0.5" y="257.31" width="3.8" height="1.3" fill="#3a3a3a"/><rect x="0" y="262.10" width="12.5" height="1.1" fill="#555"/><text x="0" y="0" font-size="8.5" fill="#333" font-family="Liberation Sans" transform="translate(15,265.60) rotate(90)">7</text><rect x="0.5" y="266.69" width="3.8" height="1.3" fill="#3a3a3a"/><rect x="0.5" y="271.38" width="3.8" height="1.3" fill="#3a3a3a"/><rect x="0.5" y="276.06" width="3.8" height="1.3" fill="#3a3a3a"/><rect x="0.5" y="280.75" width="3.8" height="1.3" fill="#3a3a3a"/><rect x="0.5" y="285.44" width="3.8" height="1.3" fill="#3a3a3a"/><rect x="0.5" y="290.12" width="3.8" height="1.3" fill="#3a3a3a"/><rect x="0.5" y="294.81" width="3.8" height="1.3" fill="#3a3a3a"/><rect x="0" y="299.60" width="12.5" height="1.1" fill="#555"/><text x="0" y="0" font-size="8.5" fill="#333" font-family="Liberation Sans" transform="translate(15,303.10) rotate(90)">8</text><rect x="0.5" y="304.19" width="3.8" height="1.3" fill="#3a3a3a"/><rect x="0.5" y="308.88" width="3.8" height="1.3" fill="#3a3a3a"/><rect x="0.5" y="313.56" width="3.8" height="1.3" fill="#3a3a3a"/><rect x="0.5" y="318.25" width="3.8" height="1.3" fill="#3a3a3a"/><rect x="0.5" y="322.94" width="3.8" height="1.3" fill="#3a3a3a"/><rect x="0.5" y="327.62" width="3.8" height="1.3" fill="#3a3a3a"/><rect x="0.5" y="332.31" width="3.8" height="1.3" fill="#3a3a3a"/><rect x="0" y="337.10" width="12.5" height="1.1" fill="#555"/><text x="0" y="0" font-size="8.5" fill="#333" font-family="Liberation Sans" transform="translate(15,340.60) rotate(90)">9</text><rect x="0.5" y="341.69" width="3.8" height="1.3" fill="#3a3a3a"/><rect x="0.5" y="346.38" width="3.8" height="1.3" fill="#3a3a3a"/><rect x="0.5" y="351.06" width="3.8" height="1.3" fill="#3a3a3a"/><rect x="0.5" y="355.75" width="3.8" height="1.3" fill="#3a3a3a"/><rect x="0.5" y="360.44" width="3.8" height="1.3" fill="#3a3a3a"/><rect x="0.5" y="365.12" width="3.8" height="1.3" fill="#3a3a3a"/><rect x="0.5" y="369.81" width="3.8" height="1.3" fill="#3a3a3a"/><rect x="0" y="374.60" width="12.5" height="1.1" fill="#555"/><text x="0" y="0" font-size="8.5" fill="#333" font-family="Liberation Sans" transform="translate(15,378.10) rotate(90)">10</text><rect x="0.5" y="379.19" width="3.8" height="1.3" fill="#3a3a3a"/><rect x="0.5" y="383.88" width="3.8" height="1.3" fill="#3a3a3a"/><rect x="0.5" y="388.56" width="3.8" height="1.3" fill="#3a3a3a"/><rect x="0.5" y="393.25" width="3.8" height="1.3" fill="#3a3a3a"/><rect x="0.5" y="397.94" width="3.8" height="1.3" fill="#3a3a3a"/><rect x="0.5" y="402.62" width="3.8" height="1.3" fill="#3a3a3a"/><rect x="0.5" y="407.31" width="3.8" height="1.3" fill="#3a3a3a"/><rect x="0" y="412.10" width="12.5" height="1.1" fill="#555"/><text x="0" y="0" font-size="8.5" fill="#333" font-family="Liberation Sans" transform="translate(15,415.60) rotate(90)">11</text><rect x="0.5" y="416.69" width="3.8" height="1.3" fill="#3a3a3a"/><rect x="0.5" y="421.38" width="3.8" height="1.3" fill="#3a3a3a"/><rect x="0.5" y="426.06" width="3.8" height="1.3" fill="#3a3a3a"/><rect x="0.5" y="430.75" width="3.8" height="1.3" fill="#3a3a3a"/><rect x="0.5" y="435.44" width="3.8" height="1.3" fill="#3a3a3a"/><rect x="0.5" y="440.12" width="3.8" height="1.3" fill="#3a3a3a"/><rect x="0.5" y="444.81" width="3.8" height="1.3" fill="#3a3a3a"/><rect x="0" y="449.60" width="12.5" height="1.1" fill="#555"/><text x="0" y="0" font-size="8.5" fill="#333" font-family="Liberation Sans" transform="translate(15,453.10) rotate(90)">12</text><rect x="0" y="107.8" width="24" height="1.6" fill="#111"/></svg>
<div class="a" style="left:231.5px;top:104.5px;width:18.5px;height:23.5px;background:#f7f8f8;border-left:1px solid #444"></div>
<div class="a" style="left:240px;top:104px;font-size:8.5px;color:#333;transform:rotate(90deg);transform-origin:0 0;left:248px;top:106px">0</div>
<svg class="a" style="left:225.5px;top:136px" width="14" height="42"><path d="M0 0 L7 5 Q12.5 7 12.5 12 V30 Q12.5 35 7 37 L0 42 Z" fill="#b4b4b4"/><path d="M8.5 15.5 L5 20.5 L8.5 25.5" fill="none" stroke="#f4f4f4" stroke-width="1.5"/></svg>
<svg class="a" style="left:1141.5px;top:138.5px" width="14" height="40"><path d="M14 0 L7 5 Q1 7 1 12 V28 Q1 33 7 35 L14 40 Z" fill="#b6b4b6"/><path d="M7 14.5 L4 19 L7 23.5" fill="none" stroke="#f4f4f4" stroke-width="1.5"/></svg>
<div class="a" style="left:0;top:104.5px;width:221px;height:542px;background:#fff"></div>
<div class="a" style="left:0;top:185px;width:221px;height:220.6px;background:#f0f0f2"></div>
<div class="row" style="top:104.5px;height:40px;"><svg width="24" height="28" viewBox="0 0 24 28" style="top:5.5px"><rect x="2.6" y="8.6" width="12.4" height="12.4" rx="2" fill="none" stroke="#5a5a5a" stroke-width="1.4"/><rect x="10.3" y="16.5" width="9" height="8.8" rx="1.6" fill="#fff" stroke="#5a5a5a" stroke-width="1.4"/></svg><div class="t">BACKGROUNDS</div></div>
<div class="row" style="top:144.6px;height:40.4px;border-bottom-width:2px;"><svg width="24" height="28" viewBox="0 0 24 28" style="top:5.5px"><rect x="2" y="9.4" width="17" height="13.4" rx="1" fill="#5a5a5a"/><rect x="4" y="7.8" width="4.5" height="2" fill="#5a5a5a"/><rect x="2" y="11" width="17" height="0.9" fill="#ddd"/><rect x="2" y="20.2" width="17" height="0.9" fill="#ddd"/><circle cx="10.5" cy="16" r="3.3" fill="none" stroke="#ddd" stroke-width="1.3"/></svg><div class="t">PHOTOS</div></div>
<div class="row" style="top:405.6px;height:40px;"><svg width="24" height="28" viewBox="0 0 24 28" style="top:5.5px"><rect x="2.55" y="8.95" width="15.7" height="15.2" rx="2" fill="none" stroke="#5a5a5a" stroke-width="1.5"/><path d="M6.4 12.6 H14.4 M10.4 12.6 V21" stroke="#5a5a5a" stroke-width="1.7"/></svg><div class="t">TEXT</div></div>
<div class="row" style="top:445.7px;height:40px;"><svg width="24" height="28" viewBox="0 0 24 28" style="top:5.5px"><rect x="2.55" y="8.95" width="15.7" height="15.2" rx="2" fill="none" stroke="#5a5a5a" stroke-width="1.5"/><path d="M6.8 12.4 V20.8 M14 12.4 V20.8 M6.8 16.6 H14" stroke="#5a5a5a" stroke-width="1.7"/></svg><div class="t">HEADLINES</div></div>
<div class="row" style="top:485.7px;height:40px;"><svg width="24" height="28" viewBox="0 0 24 28" style="top:5.5px"><rect x="3.2" y="11.5" width="14.6" height="13" rx="1.5" fill="none" stroke="#5a5a5a" stroke-width="1.4"/><rect x="3.2" y="11.2" width="14.6" height="2.6" fill="#5a5a5a"/><path d="M3.2 17.3 H17.8 M3.2 21 H17.8 M7 13.5 V25 M10.5 13.5 V25 M14 13.5 V25" stroke="#5a5a5a" stroke-width="1"/><path d="M5.3 12 V10.5 Q6.7 7.3 8.1 10.5 V12 M12.9 12 V10.5 Q14.3 7.3 15.7 10.5 V12" fill="none" stroke="#5a5a5a" stroke-width="1.3"/></svg><div class="t">CALENDAR</div></div>
<div class="row" style="top:525.7px;height:40px;"><svg width="24" height="28" viewBox="0 0 24 28" style="top:5.5px"><g fill="none" stroke="#5a5a5a" stroke-width="1.2" stroke-linejoin="round"><path d="M10.4 7.5 Q14.5 12 14.5 16 Q14.5 19.5 10.4 21 Q6.3 19.5 6.3 16 Q6.3 12 10.4 7.5 Z"/><path d="M7.2 11.3 Q4.5 9.5 4.6 10.2 Q4.6 11 5.6 12.6 M13.6 11.3 Q16.3 9.5 16.2 10.2 Q16.2 11 15.2 12.6"/><path d="M6.5 13 Q2.5 11.5 1.3 12.5 Q1.5 18.5 6 20 Q8 21 10.4 21 M14.3 13 Q18.3 11.5 19.5 12.5 Q19.3 18.5 14.8 20 Q12.8 21 10.4 21"/><path d="M6 19.8 Q2 19.8 1.3 21 Q3 23.5 8.5 23 L10.4 21 M14.8 19.8 Q18.8 19.8 19.5 21 Q17.8 23.5 12.3 23 L10.4 21"/><path d="M8.7 23 L10.4 25.2 L12.1 23"/></g></svg><div class="t">CLIP ART</div></div>
<div class="row" style="top:565.7px;height:40px;"><svg width="24" height="28" viewBox="0 0 24 28" style="top:5.5px"><polygon points="10.00,7.10 12.59,11.84 17.89,12.84 14.18,16.76 14.88,22.11 10.00,19.80 5.12,22.11 5.82,16.76 2.11,12.84 7.41,11.84" fill="none" stroke="#5a5a5a" stroke-width="1.5" stroke-linejoin="round"/><g fill="#5a5a5a"><circle cx="4.6" cy="7.7" r="0.9"/><circle cx="15.3" cy="7.4" r="0.9"/><circle cx="1.4" cy="17.8" r="0.9"/><circle cx="18.6" cy="17.8" r="0.9"/><circle cx="10" cy="24.1" r="0.9"/></g></svg><div class="t">SHAPES AND LINES</div></div>
<div class="row" style="top:605.7px;height:40px;"><svg width="24" height="28" viewBox="0 0 24 28" style="top:5.5px"><g fill="none" stroke="#5a5a5a" stroke-width="1.3" stroke-linejoin="round"><path d="M11.6 5.8 L21 14.8 L14.6 21.2 L5.2 12.2 Z"/><path d="M7 14 L12.8 19.4 L11.4 20.8 Q10.5 21.5 9.7 20.7 L6.4 17.4 Q5.6 16.6 6.3 15.7 Z"/><path d="M8.2 18.8 L10.2 20.8 L4 26.6 Q2.8 27.6 1.8 26.6 Q0.9 25.6 2 24.5 Z"/><path d="M12.8 9 L10.8 11 M14.8 11 L12.8 13 M16.8 13 L14.8 15"/></g></svg><div class="t">PAINT</div></div>
<div class="a" style="left:0;top:405px;width:221px;height:1px;border-top:1px dotted #999"></div>
<div class="tool" style="left:16.3px;top:188.5px"><svg class="a" style="left:-1.3px;top:-1.3px" width="25" height="25"><path d="M3 7.2 H4.5 V6.2 H7.5 V7.2 H10 L10.5 5.3 H14.5 L15 7.2 H21.7 V19.8 H3 Z" fill="#4a4a4a"/><circle cx="11.65" cy="13.5" r="4.1" fill="#fff"/><circle cx="11.65" cy="13.5" r="2.6" fill="#4a4a4a"/><rect x="18" y="9" width="2" height="1.3" fill="#fff"/></svg></div>
<div class="tl" style="left:-1.6999999999999993px;top:215.2px">Add</div>
<div class="tool" style="left:68px;top:188.5px"><svg class="a" style="left:-1.3px;top:-1.3px" width="25" height="25"><rect x="3.9" y="4.1" width="16.3" height="16.8" fill="none" stroke="#4a4a4a" stroke-width="1.4"/><path d="M7.4 7.6 H17 M12.2 7.6 V18.5" stroke="#4a4a4a" stroke-width="1.5"/></svg></div>
<div class="tl" style="left:50px;top:215.2px">Border</div>
<div class="tool" style="left:119.5px;top:188.5px"><svg class="a" style="left:-1.3px;top:-1.3px" width="25" height="25"><path d="M3.4 4 H19.5 L21.3 5.8 V21.1 H5.2 L3.4 19.3 Z" fill="#4a4a4a"/><circle cx="11.3" cy="9.3" r="3" fill="#fff"/><path d="M6.5 17.3 Q6.8 13 11.3 13 Q15.8 13 16.2 17.3 Z" fill="#fff"/></svg></div>
<div class="tl" style="left:101.5px;top:215.2px">Shadow</div>
<div class="tool" style="left:171.3px;top:188.5px"><svg class="a" style="left:-1.3px;top:-1.3px" width="25" height="25"><path d="M2.9 4 H21.6 V21.1 H2.9 Z" fill="#9a9a9a"/><path d="M21.6 4 V21.1 H2.9 Z" fill="#4a4a4a"/><circle cx="12.2" cy="9.3" r="3" fill="#fff"/><path d="M7.4 17.3 Q7.7 13 12.2 13 Q16.7 13 17.1 17.3 Z" fill="#fff"/></svg></div>
<div class="tl" style="left:153.3px;top:215.2px">Effects</div>
<div class="tool" style="left:16.3px;top:239.5px"><svg class="a" style="left:-1.3px;top:-1.3px" width="25" height="25"><path d="M10 3.9 Q13 8 12.8 12.7 A4.5 4.5 0 0 1 3.8 12.7 Q4.2 8.5 10 3.9 Z" fill="#5a5a5a"/><path d="M15.9 6 Q19.6 10 19.7 12.3 A3.5 3.5 0 0 1 12.7 12.3 Q12.8 9.5 15.9 6 Z" fill="#8a8a8a"/><path d="M14.5 11.8 Q17.8 14.5 18 16.4 A3 3 0 0 1 12 16.4 Q12 14.5 14.5 11.8 Z" fill="#c8c8c8"/></svg></div>
<div class="tl" style="left:-1.6999999999999993px;top:266.2px">Recolor</div>
<div class="tool" style="left:68px;top:239.5px"><svg class="a" style="left:-1.3px;top:-1.3px" width="25" height="25"><path d="M19.2 8.3 A8 8 0 0 0 5 9.8 M4.8 15.8 A8 8 0 0 0 19 14.5" fill="none" stroke="#333" stroke-width="1.6"/><path d="M2.3 9.2 L7.3 9.2 L4.6 13 Z M16.8 15.3 L21.8 15.3 L19.3 11.5 Z" fill="#333"/></svg></div>
<div class="tl" style="left:50px;top:266.2px">Replace</div>
<div class="tool" style="left:119.5px;top:239.5px"><svg class="a" style="left:-1.3px;top:-1.3px" width="25" height="25"><path d="M6.75 3.1 V17.7 H21.3 M3 6.8 H17.6 V21" fill="none" stroke="#555" stroke-width="1.5"/></svg></div>
<div class="tl" style="left:101.5px;top:266.2px">Crop</div>
<div class="tool" style="left:171.3px;top:239.5px"><svg class="a" style="left:-1.3px;top:-1.3px" width="25" height="25"><path d="M4.1 4.3 V19.75 H20" fill="none" stroke="#777" stroke-width="1.3"/><path d="M19.5 17.5 Q19 8.2 10.4 8 V5.2 L6.6 10.2 L10.4 14.75 V12 Q16 11.5 19.5 17.5 Z" fill="#666"/></svg></div>
<div class="tl" style="left:153.3px;top:266.2px">Left</div>
<div class="tool" style="left:16.3px;top:290.0px"><svg class="a" style="left:-1.3px;top:-1.3px" width="25" height="25"><path d="M20.3 4.9 V20.5 H4.3" fill="none" stroke="#777" stroke-width="1.3"/><path d="M5 17 Q5.5 8.7 14 8.5 V5.8 L18.1 10.5 L14 15 V12.5 Q8.5 12 5 17 Z" fill="#666"/></svg></div>
<div class="tl" style="left:-1.6999999999999993px;top:316.7px">Right</div>
<div class="tool" style="left:68px;top:290.0px"><svg class="a" style="left:-1.3px;top:-1.3px" width="25" height="25"><path d="M4.8 5.2 L19.8 19.6 M19.8 5.2 L4.8 19.6" stroke="#555" stroke-width="2.8"/></svg></div>
<div class="tl" style="left:50px;top:316.7px">Remove</div>
<div class="tool" style="left:119.5px;top:290.0px"><svg class="a" style="left:-1.3px;top:-1.3px" width="25" height="25"><circle cx="12.4" cy="12.4" r="7.7" fill="none" stroke="#444" stroke-width="1.3"/><circle cx="12.4" cy="12.4" r="4.9" fill="none" stroke="#444" stroke-width="1.2"/><path d="M12.4 9.8 L15 12.4 L12.4 15 L9.8 12.4 Z" fill="none" stroke="#444" stroke-width="1"/><path d="M10.3 10.3 L9 9 M14.5 10.3 L15.8 9 M10.3 14.5 L9 15.8 M14.5 14.5 L15.8 15.8" stroke="#444" stroke-width="0.9"/></svg></div>
<div class="tl" style="left:101.5px;top:316.7px">Editor</div>
<div class="a" style="left:13px;top:351px;font-size:10.5px;color:#333">Opacity</div>
<div class="a" style="left:13px;top:381px;font-size:10.5px;color:#333">Rotation</div>
<div class="a" style="left:63px;top:355px;width:137px;height:3px;background:#777;border-radius:2px"></div>
<div class="a" style="left:63px;top:385px;width:137px;height:3px;background:#777;border-radius:2px"></div>
<div class="a" style="left:184px;top:348.5px;width:16px;height:16px;background:#1565e0;border-radius:50%"></div>
<div class="a" style="left:63.5px;top:378.5px;width:16px;height:16px;background:#1565e0;border-radius:50%"></div>
<div class="a" style="left:221px;top:104.5px;width:4.5px;height:479px;background:#9a9a9a;border-radius:2px"></div>
<div class="a" style="left:1155px;top:104px;width:45px;height:542px;background:#fff"></div>
<div class="a" style="left:1155px;top:104px;width:45px;height:34.7px;background:linear-gradient(90deg,#3d7dff,#1a3cff 60%,#0a10f0)"></div>
<svg class="a" style="left:1167px;top:148.7px;overflow:visible" width="22" height="22"><rect x="4" y="3" width="11" height="11" rx="1.5" fill="none" stroke="#5a5a5a" stroke-width="1.3"/><rect x="10.5" y="10" width="8.5" height="8.5" rx="1.5" fill="#fff" stroke="#5a5a5a" stroke-width="1.3"/></svg>
<svg class="a" style="left:1167px;top:192px;overflow:visible" width="22" height="22"><rect x="5.2" y="7.3" width="14.9" height="11.2" rx="1" fill="#fff" stroke="#5a5a5a" stroke-width="1.3"/><rect x="2.7" y="4.8" width="14.9" height="11.2" rx="1" fill="#fff" stroke="#5a5a5a" stroke-width="1.3"/><rect x="0.2" y="2.3" width="14.9" height="11.2" rx="1" fill="#fff" stroke="#5a5a5a" stroke-width="1.4"/><path d="M5.6 5 V10.2 H9.6" fill="none" stroke="#5a5a5a" stroke-width="1.4"/></svg>
<svg class="a" style="left:1167px;top:234.5px;overflow:visible" width="22" height="22"><g transform="translate(0.4,-4.9)"><g fill="none" stroke="#5a5a5a" stroke-width="1.2" stroke-linejoin="round"><path d="M10.4 7.5 Q14.5 12 14.5 16 Q14.5 19.5 10.4 21 Q6.3 19.5 6.3 16 Q6.3 12 10.4 7.5 Z"/><path d="M7.2 11.3 Q4.5 9.5 4.6 10.2 Q4.6 11 5.6 12.6 M13.6 11.3 Q16.3 9.5 16.2 10.2 Q16.2 11 15.2 12.6"/><path d="M6.5 13 Q2.5 11.5 1.3 12.5 Q1.5 18.5 6 20 Q8 21 10.4 21 M14.3 13 Q18.3 11.5 19.5 12.5 Q19.3 18.5 14.8 20 Q12.8 21 10.4 21"/><path d="M6 19.8 Q2 19.8 1.3 21 Q3 23.5 8.5 23 L10.4 21 M14.8 19.8 Q18.8 19.8 19.5 21 Q17.8 23.5 12.3 23 L10.4 21"/><path d="M8.7 23 L10.4 25.2 L12.1 23"/></g></g></svg>
<svg class="a" style="left:1167px;top:277.9px;overflow:visible" width="22" height="22"><path d="M2.5 18.7 Q-1.8 18.3 -1.6 13.8 Q-1.2 9.8 3.5 9.5 Q5 3 10.8 2.9 Q17 3 18.3 9 Q22.8 9.5 22.8 13.8 Q22.7 18.5 18.5 18.7 Z" fill="none" stroke="#5a5a5a" stroke-width="1.3"/><path d="M7 8 Q8.5 5.5 11 5.2" fill="none" stroke="#5a5a5a" stroke-width="0.9"/><text x="10.6" y="16.2" font-size="6.8" fill="#5a5a5a" text-anchor="middle" font-family="Liberation Sans">.com</text></svg>
<svg class="a" style="left:1167px;top:320.8px;overflow:visible" width="22" height="22"><rect x="3.2" y="2.8" width="15.6" height="15.6" rx="1.8" fill="none" stroke="#5a5a5a" stroke-width="1.6"/><path d="M7.5 6.3 V14.9 M14.5 6.3 V14.9 M7.5 10.6 H14.5" stroke="#5a5a5a" stroke-width="1.9"/></svg>
<svg class="a" style="left:1167px;top:363.2px;overflow:visible" width="22" height="22"><rect x="2.5" y="4.5" width="17" height="13" rx="1" fill="#5a5a5a"/><rect x="4" y="3" width="4" height="2" fill="#5a5a5a"/><rect x="2.5" y="6" width="17" height="0.8" fill="#ddd"/><rect x="2.5" y="15" width="17" height="0.8" fill="#ddd"/><circle cx="11" cy="11" r="3.3" fill="none" stroke="#ddd" stroke-width="1.2"/></svg>
<svg class="a" style="left:1167px;top:406.5px;overflow:visible" width="22" height="22"><rect x="3.2" y="2.8" width="15.6" height="15.6" rx="1.8" fill="none" stroke="#5a5a5a" stroke-width="1.6"/><path d="M8.5 15 V6.5 H12 A2.3 2.3 0 0 1 12 11.1 H8.5" fill="none" stroke="#5a5a5a" stroke-width="1.9"/></svg>
<svg class="a" style="left:1167px;top:448.7px;overflow:visible" width="22" height="22"><g transform="translate(0.7,-4.4)"><polygon points="10.00,7.10 12.59,11.84 17.89,12.84 14.18,16.76 14.88,22.11 10.00,19.80 5.12,22.11 5.82,16.76 2.11,12.84 7.41,11.84" fill="none" stroke="#5a5a5a" stroke-width="1.5" stroke-linejoin="round"/><g fill="#5a5a5a"><circle cx="4.6" cy="7.7" r="0.9"/><circle cx="15.3" cy="7.4" r="0.9"/><circle cx="1.4" cy="17.8" r="0.9"/><circle cx="18.6" cy="17.8" r="0.9"/><circle cx="10" cy="24.1" r="0.9"/></g></g></svg>
<div class="a" style="left:283.4px;top:62.3px;width:633px;height:524.8px;background:#fafafa;border:1px solid #7d7d7d;box-shadow:0 0 14px rgba(0,0,0,0.28)"></div>
<div class="a" style="left:284.4px;top:63.3px;width:630.5px;height:19.5px;background:#fff;border-bottom:1px solid #ececec"></div>
<svg class="a" style="left:284px;top:64px" width="16" height="17"><defs><linearGradient id="lg2" x1="0" y1="0" x2="0" y2="1"><stop offset="0" stop-color="#8a2bb8"/><stop offset="1" stop-color="#4b32d6"/></linearGradient></defs><circle cx="7.7" cy="8.5" r="6" fill="url(#lg2)"/><text x="7.7" y="10.3" font-size="5" fill="#fff" text-anchor="middle" font-family="Liberation Sans" font-weight="bold">PM</text></svg>
<div class="a" style="left:301.3px;top:66.5px;font-size:10.6px;color:#222;letter-spacing:-0.6px;white-space:nowrap">PrintMaster v10</div>
<div class="a" style="left:819.5px;top:72px;width:9px;height:1px;background:#333"></div>
<div class="a" style="left:855.5px;top:67.5px;width:9px;height:9px;border:1px solid #ccc"></div>
<svg class="a" style="left:891.5px;top:67px" width="11" height="11"><path d="M1 1 L10 10 M10 1 L1 10" stroke="#222" stroke-width="0.9"/></svg>
<div class="a" style="left:568.5px;top:84.5px;font-size:12.2px;color:#222;white-space:nowrap">Photo Crop</div>
<div class="a" style="left:305.3px;top:109px;font-size:10.5px;color:#8a8a8a;white-space:nowrap">Preview</div>
<div class="a" style="left:305px;top:127.4px;width:590px;height:412.4px;background:#fbfbfb;border:1px solid #9a9a9a"></div>
<div class="a" style="left:307.5px;top:148.3px;width:118.5px;height:390.7px;background:#efefef;box-shadow:2px 3px 6px rgba(0,0,0,0.2)"></div>
<div class="a" style="left:421.2px;top:148.3px;width:4.8px;height:390.7px;background:#f7f7f7"></div>
<div class="a" style="left:421.7px;top:253.3px;width:4.3px;height:35px;background:#a8a8a8;border-radius:2px"></div>
<svg class="a" style="left:307.5px;top:148.3px" width="114" height="391" viewBox="307.5 148.3 114 391">
<g fill="#000">
 <ellipse cx="350" cy="183.5" rx="15" ry="20.5"/><ellipse cx="377.5" cy="183.5" rx="15" ry="20.5"/><ellipse cx="363.7" cy="183.8" rx="16" ry="21"/><rect x="340" y="172" width="47" height="24"/>
 <path d="M357.5 151.8 Q361.5 155 363.8 161" fill="none" stroke="#000" stroke-width="4.8" stroke-linecap="round"/>
 <path d="M364.5 160 Q369 152 376 151 Q374 152 373.5 156 Q374 161 377.5 160.5 Q380 159 378 153.5 Q377 150 381.5 150 Q382.5 154 386 154 Q389.5 153.5 388 150.5 Q386 148 382 149.5 M386 149 H394.5" fill="none" stroke="#000" stroke-width="2.1" stroke-linecap="round"/>
 <path d="M345.1 248 V237 Q345.1 220.5 365.2 220.5 Q385.4 220.5 385.4 237 V248 Z"/><path d="M337.5 246.6 H391.9 Q394.4 246.6 394.4 249 V254 Q394.4 258.7 389.5 258.7 H340 Q335 258.7 335 254 V249 Q335 246.6 337.5 246.6 Z"/>
 <path d="M357.3 333.6 Q359.5 325 358.5 315 Q357.5 308 357 304 L362 292 L370 292 L375 304 Q374 310 373 316 Q372 325 374.6 333.6 Z"/>
 <g fill="none" stroke="#000" stroke-width="2.4" stroke-linecap="round" stroke-linejoin="round"><path d="M359 306 L350.6 301.4 L346.2 307.6 M359.5 302 L352.3 291.4 L341.1 293.9 M361 297 L353.4 281.4 L347.3 280.3 M362 297 L361.2 275.8 M365.5 297 L369 281.4 L368.5 278 M370 302 L379 289.2 L383.5 276.4 M371.5 308 L380.7 299.8 L388 301.4"/></g>
 <g fill="none" stroke="#000" stroke-width="3.6" stroke-linecap="round"><path d="M359 305 L352 301.5 M359.5 301 L353 292 M361 296 L356 286 M362.5 296 L362 284 M365.5 296 L368.5 284 M370 301 L377.5 291 M371.5 307 L379 300.5"/></g>
 <circle cx="361" cy="348" r="9.5"/><circle cx="374" cy="349" r="8.8"/><circle cx="348.5" cy="356" r="9"/><circle cx="382" cy="359" r="9"/><circle cx="344.5" cy="366" r="7"/><circle cx="385" cy="368" r="7"/><circle cx="351" cy="372.5" r="8"/><circle cx="377.5" cy="372.5" r="8.3"/><circle cx="365" cy="362" r="14"/>
 <path d="M358.7 399 Q360.6 390 360.3 382 L355 374 L374 374 L369 382 Q368.6 391 369.6 399 Z"/><path d="M358.3 375.8 L361.6 380.3 L362.2 377.2 Z M366.6 377.4 L367.3 380.6 L369.6 376 Z" fill="#fff"/>
 <path d="M353.5 406 H376.5 L393.1 422.6 V445.4 L376.5 462 H353.5 L336.4 445.4 V422.6 Z" stroke="#000" stroke-width="4" stroke-linejoin="round"/>
 <rect x="361.9" y="415.3" width="6.2" height="21.7" rx="3.1" fill="#fff"/><circle cx="365" cy="444.5" r="3.5" fill="#fff"/>
 <path d="M337.5 496 L373.5 474.5 L392.5 481.5 L391 502 L353 522.5 Z" stroke="#000" stroke-width="4.5" stroke-linejoin="round"/>
 <circle cx="385.2" cy="485.8" r="3.6" fill="#fff"/>
 <path d="M348.6 539.5 V538 Q350 533.7 358 533.7 H372 Q380 533.7 381.2 538 V539.5 Z"/>
</g></svg>

<svg class="a" style="left:503.5px;top:208.5px" width="193" height="249.2" viewBox="0 0 193 249.2">
<rect width="193" height="249.2" fill="#1d0e5c"/>
<path d="M96.2 0 V249.2 M96.2 124.5 H193" stroke="#4a3d98" stroke-width="0.9"/>
<path d="M80 0 Q84 35 94 60 Q96 70 96.2 80" fill="none" stroke="#4a3ea0" stroke-width="0.7"/>
<path d="M117 0 Q112 25 97 45" fill="none" stroke="#4a3ea0" stroke-width="0.7"/>
<path d="M96.2 88 Q104 100 110 124" fill="none" stroke="#4a3ea0" stroke-width="0.7"/>
<path d="M96.2 200 Q86 220 82 249" fill="none" stroke="#4a3ea0" stroke-width="0.7"/>
<g fill="#e82a8a">
<rect x="80.5" y="3.5" width="3.8" height="2.6"/><rect x="80.8" y="11" width="3.8" height="2.6"/><rect x="81.3" y="18.5" width="3.8" height="2.6"/><rect x="82.3" y="26" width="3.8" height="2.6"/><rect x="84" y="33" width="3.8" height="2.6" transform="rotate(15 86 34)"/><rect x="86.2" y="40" width="3.8" height="2.6" transform="rotate(20 88 41)"/><rect x="88.8" y="46.5" width="3.8" height="2.6" transform="rotate(25 90 47)"/><rect x="91.5" y="53" width="3.8" height="2.6" transform="rotate(30 93 54)"/>
<rect x="114" y="4" width="3.6" height="2.5"/><rect x="112.5" y="11" width="3.6" height="2.5" transform="rotate(-15 114 12)"/><rect x="110" y="18" width="3.6" height="2.5" transform="rotate(-25 112 19)"/><rect x="106.5" y="25" width="3.6" height="2.5" transform="rotate(-30 108 26)"/><rect x="102.5" y="31.5" width="3.6" height="2.5" transform="rotate(-35 104 32)"/><rect x="98" y="37.5" width="3.6" height="2.5" transform="rotate(-40 100 38)"/>
</g>
<g fill="#3ad6d0">
<rect x="99.5" y="92" width="2.8" height="2.8"/><rect x="101.5" y="98.5" width="2.8" height="2.8"/><rect x="103.5" y="105" width="2.8" height="2.8"/><rect x="105.5" y="111.5" width="2.8" height="2.8"/><rect x="107.5" y="118" width="2.8" height="2.8"/>
<rect x="94" y="205" width="2.8" height="2.8"/><rect x="91.8" y="210.5" width="2.8" height="2.8"/><rect x="89.8" y="216" width="2.8" height="2.8"/><rect x="88" y="222" width="2.8" height="2.8"/><rect x="86.5" y="228" width="2.8" height="2.8"/><rect x="85" y="234" width="2.8" height="2.8"/><rect x="84" y="240" width="2.8" height="2.8"/><rect x="83" y="245" width="2.8" height="2.8"/>
<circle cx="23" cy="11.4" r="1.3"/><circle cx="51.7" cy="12.5" r="1.3"/><circle cx="84.2" cy="62.5" r="1.3"/><circle cx="20.7" cy="99.8" r="1.3"/><circle cx="30.4" cy="112.7" r="1.3"/><circle cx="60.6" cy="109.3" r="1.3"/><circle cx="88.5" cy="115.5" r="1.3"/><circle cx="17.1" cy="158.7" r="1.3"/><circle cx="57.1" cy="156.8" r="1.3"/><circle cx="88.5" cy="171.8" r="1.3"/><circle cx="72.9" cy="210.8" r="1.3"/><circle cx="33.3" cy="233.4" r="1.3"/>
<circle cx="179.6" cy="24.6" r="1.3"/><circle cx="140" cy="40" r="1.2"/><circle cx="112.3" cy="57" r="1.2"/><circle cx="143.2" cy="81" r="1.2"/><circle cx="130.8" cy="57.9" r="1.2"/><circle cx="162.6" cy="56.3" r="1.2"/><circle cx="167.2" cy="78.8" r="1.2"/><circle cx="164.9" cy="99.7" r="1.2"/><circle cx="175.8" cy="52.5" r="1.2"/>
</g>
<g fill="#2e9ab0" opacity="0.8">
<circle cx="70" cy="9.8" r="0.9"/><circle cx="12.2" cy="43.9" r="0.9"/><circle cx="13.8" cy="79.5" r="0.9"/><circle cx="26" cy="78" r="0.9"/><circle cx="90.3" cy="18.4" r="0.9"/><circle cx="84.2" cy="80.3" r="0.9"/><circle cx="14.7" cy="112" r="0.9"/><circle cx="27.8" cy="146" r="0.9"/><circle cx="89" cy="142" r="0.9"/><circle cx="62.2" cy="173.8" r="0.9"/><circle cx="24.6" cy="176.8" r="0.9"/><circle cx="156.4" cy="23.8" r="1.2"/><circle cx="15" cy="238" r="0.9"/><circle cx="60" cy="190" r="0.9"/>
</g>
<g fill="#efd27a" font-family="Liberation Serif" font-style="italic" font-weight="bold"><text x="0" y="0" font-size="7.4" textLength="68" lengthAdjust="spacingAndGlyphs" transform="translate(69.9,25.3) rotate(90)">A wish for you on your birthday,</text><text x="0" y="0" font-size="7.4" textLength="72" lengthAdjust="spacingAndGlyphs" transform="translate(63.4,25.3) rotate(90)">whatever you ask may you receive,</text><text x="0" y="0" font-size="7.4" textLength="66" lengthAdjust="spacingAndGlyphs" transform="translate(56.9,25.3) rotate(90)">whatever you seek may you find,</text><text x="0" y="0" font-size="7.4" textLength="74" lengthAdjust="spacingAndGlyphs" transform="translate(50.4,25.3) rotate(90)">whatever you wish may it be fulfilled</text><text x="0" y="0" font-size="7.4" textLength="60" lengthAdjust="spacingAndGlyphs" transform="translate(43.9,25.3) rotate(90)">on your birthday and always.</text><text x="0" y="0" font-size="7.4" textLength="36" lengthAdjust="spacingAndGlyphs" transform="translate(37.4,25.3) rotate(90)">Happy birthday</text></g>
<!-- top-right cluster -->
<rect x="134.7" y="21.5" width="10.9" height="15.5" rx="2" fill="#f79a1e"/><rect x="134.7" y="21.5" width="3" height="15.5" fill="#e8208a"/>
<path d="M146 20.5 Q149 29 146 38" stroke="#f0208e" stroke-width="2" fill="none"/><path d="M146.5 29 H151.5" stroke="#f0208e" stroke-width="1.8"/>
<path d="M127 25 H134 M127.5 29 H134 M128 33 H134" stroke="#f79a1e" stroke-width="1.2"/>
<ellipse cx="168.8" cy="35.4" rx="7.6" ry="7.2" fill="#f79a1e" transform="rotate(30 168.8 35.4)"/><path d="M162.5 33 Q168 36 174 33.5 M162.5 38 Q168 41 174.5 38.5" stroke="#e8208a" stroke-width="0.9" fill="none"/>
<path d="M173 41 Q178 46 183 44 Q186 44 185.8 47" stroke="#ccc" stroke-width="0.7" fill="none"/>
<rect x="115.4" y="43" width="14.6" height="15.7" fill="#e03080" transform="rotate(8 122 51)"/><rect x="115.4" y="43" width="4.5" height="15.7" fill="#f79a1e" transform="rotate(8 122 51)"/>
<ellipse cx="118.5" cy="77.2" rx="7.2" ry="6.8" fill="#f79a1e"/><path d="M112 75 Q118 78 125 75.5 M112 80 Q118 83 125 80.5" stroke="#e8208a" stroke-width="0.9" fill="none"/>
<rect x="168.8" y="63.3" width="13.2" height="14.7" fill="#e03080" transform="rotate(-8 175 70)"/><rect x="168.8" y="63.3" width="3.5" height="14.7" fill="#f79a1e" transform="rotate(-8 175 70)"/>
<ellipse cx="130.9" cy="94.3" rx="6.2" ry="4.8" fill="#e03080" transform="rotate(-20 130.9 94.3)"/>
<ellipse cx="171" cy="91.2" rx="6.5" ry="5" fill="#e03080" transform="rotate(20 171 91.2)"/>
<path d="M148.7 102 L159.5 96.6 L155.6 91.2 Z" fill="#f79a1e"/><path d="M148.7 102 L152.5 93.5" stroke="#e8208a" stroke-width="1"/>
<text x="0" y="0" font-size="19" fill="#f23096" font-family="Liberation Sans" font-style="italic" font-weight="bold" textLength="53" lengthAdjust="spacingAndGlyphs" transform="translate(162,88.8) rotate(-90)">Birthday</text><text x="0" y="0" font-size="7.5" fill="#fff" font-family="Liberation Sans" font-weight="bold" textLength="23" lengthAdjust="spacingAndGlyphs" transform="translate(141,75.7) rotate(-90)">HAPPY</text>
<!-- bottom-left -->
<rect x="2.9" y="177.4" width="12" height="17.9" fill="#e03080"/><rect x="12.8" y="176.5" width="4.3" height="19.5" rx="1" fill="#f79a1e"/>
<path d="M17.5 186 L21 183.5 M17.5 186 L21 188.5" stroke="#e8208a" stroke-width="1.3"/>
<path d="M5 181 Q7 184 5 187 Q7 190 5 193 M9 180 Q11 183 9 186 Q11 189 9 192" stroke="#f8a0c8" stroke-width="0.6" fill="none"/>
<ellipse cx="67.3" cy="197.2" rx="10.6" ry="8.6" fill="#e03080" transform="rotate(-30 67.3 197.2)"/><path d="M60 198 Q66 193 74 195 M61 203 Q67 198 75 200" stroke="#f8b0d0" stroke-width="0.7" fill="none"/>
<ellipse cx="65.5" cy="222" rx="9.5" ry="9.6" fill="#f79a1e" transform="rotate(-20 65.5 222)"/><path d="M57 220 Q65 214 74 217 M57 226 Q65 220 74 223 M60 231 Q66 227 72 228" stroke="#e8208a" stroke-width="0.9" fill="none"/>
<path d="M41.8 207.8 Q46 213 54.3 211.5 M56 206 Q52 210 56 213 L59 213" stroke="#cfcfcf" stroke-width="0.7" fill="none"/>
<!-- bottom-right cake -->
<rect x="135.8" y="176" width="16.2" height="24.7" rx="4" fill="#f79a1e"/><path d="M135.8 178 V198" stroke="#e8208a" stroke-width="2.2"/>
<path d="M153.2 173.5 Q157.5 188 153.2 202" stroke="#f0208e" stroke-width="2.3" fill="none"/><path d="M154 188.3 H161.8 M160.5 185 V191.5" stroke="#f0208e" stroke-width="2"/>
<g fill="#fff"><circle cx="141" cy="182" r="0.8"/><circle cx="147" cy="180" r="0.9"/><circle cx="145" cy="188" r="0.8"/><circle cx="149" cy="194" r="0.8"/><circle cx="141" cy="196" r="0.7"/></g>
<path d="M128 181 H135.8 M127.5 187 H135.8 M128 193 H135.8" stroke="#f79a1e" stroke-width="1.4"/>
<g fill="#fff"><circle cx="128.5" cy="180" r="0.8"/><circle cx="127" cy="187" r="0.8"/><circle cx="128" cy="193.5" r="0.8"/></g>
</svg>

<div class="a" style="left:305.2px;top:556.5px;width:77.5px;height:21px;border-radius:3px;background:linear-gradient(90deg,#1d62ff,#0a2cff);color:#fff;font-size:11px;text-align:center;line-height:21px;-webkit-text-stroke:0.25px #fff">Shape</div>
<div class="a" style="left:386.2px;top:556.5px;width:77.3px;height:21px;border-radius:3px;background:linear-gradient(90deg,#1d62ff,#0a2cff);color:#fff;font-size:11px;text-align:center;line-height:21px;-webkit-text-stroke:0.25px #fff">Reset</div>
<div class="a" style="left:469.5px;top:559.3px;width:16px;height:16px;border-radius:50%;border:1.5px solid #1b8fd8;background:#fff"></div>
<div class="a" style="left:492px;top:560.5px;font-size:12px;color:#222;white-space:nowrap;-webkit-text-stroke:0.2px #222">Free Hand</div>
<div class="a" style="left:557.6px;top:559.3px;width:16px;height:16px;border-radius:50%;border:1.5px solid #1b8fd8;background:#fff"></div>
<div class="a" style="left:562.6px;top:564.3px;width:6px;height:6px;border-radius:50%;background:#1b8fd8"></div>
<div class="a" style="left:580px;top:560.5px;font-size:12px;color:#222;white-space:nowrap;letter-spacing:0.5px;-webkit-text-stroke:0.2px #222">Without</div>
<div class="a" style="left:749.4px;top:554.7px;width:66.6px;height:21px;border-radius:3px;background:#6e6e6e;color:#fff;font-size:11px;text-align:center;line-height:19px;border:1px solid #5a5a5a;-webkit-text-stroke:0.25px #fff">Cancel</div>
<div class="a" style="left:820.7px;top:554.7px;width:66.7px;height:21px;border-radius:3px;background:linear-gradient(90deg,#1d62ff,#0000ff);color:#fff;font-size:11px;text-align:center;line-height:21px;-webkit-text-stroke:0.25px #fff">Apply</div>
</body></html>
